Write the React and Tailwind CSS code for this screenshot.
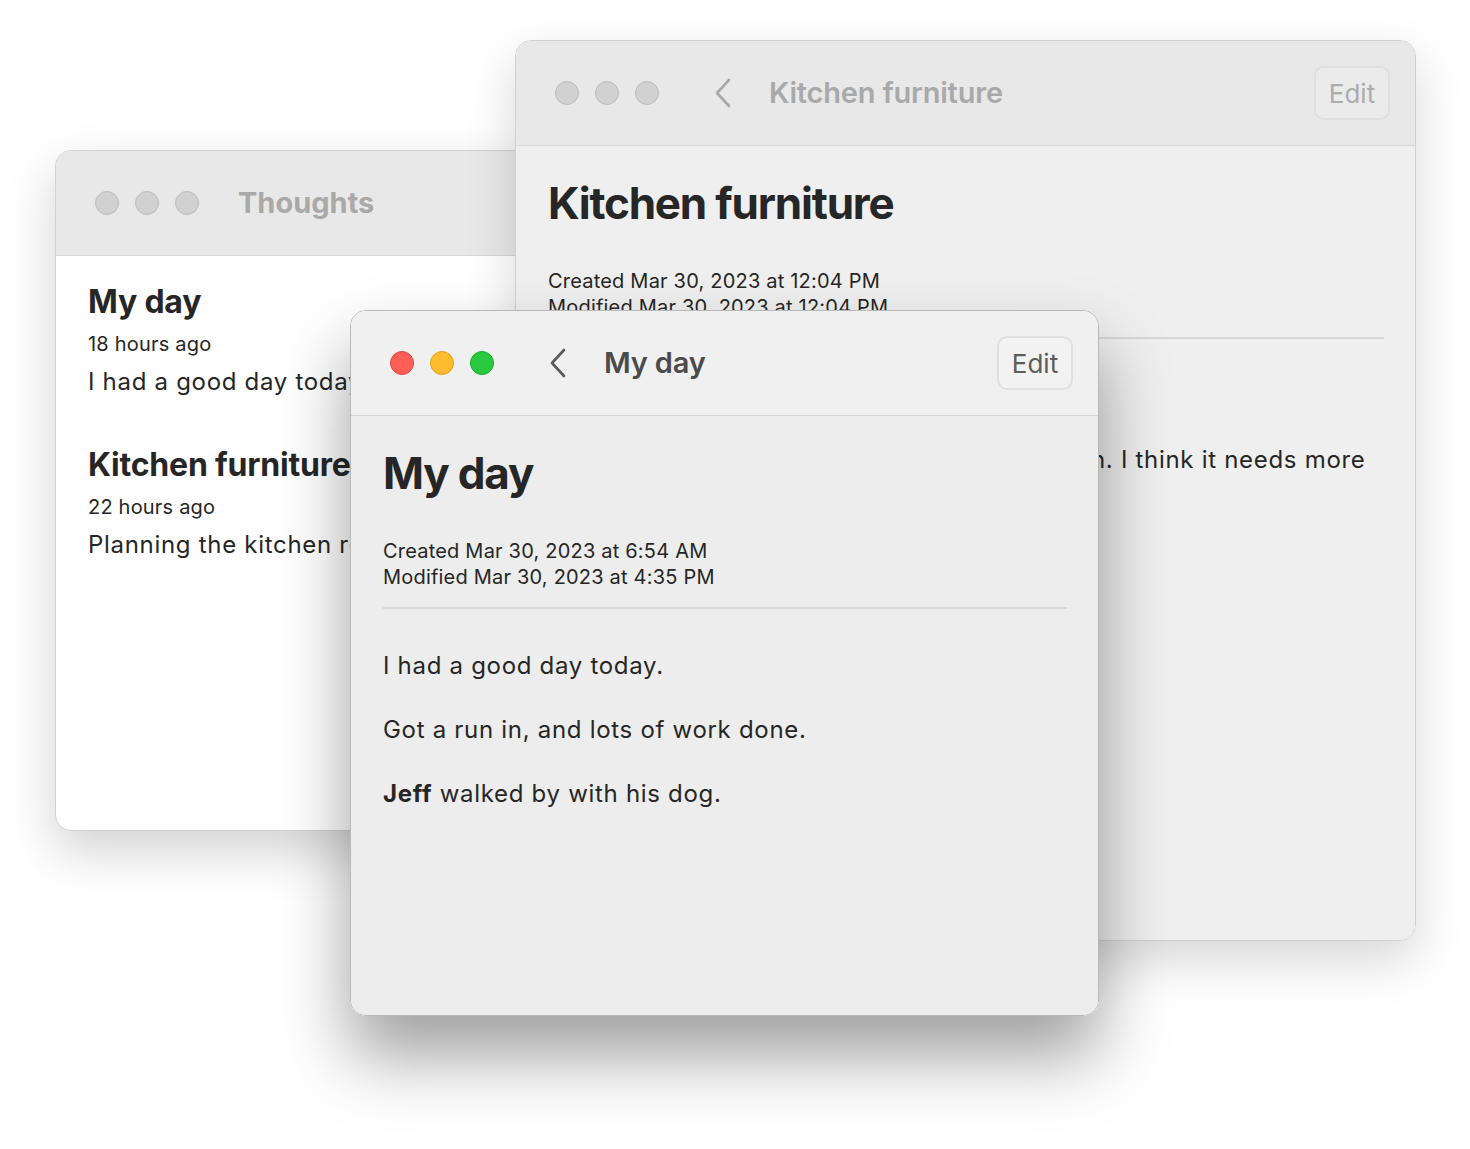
import React from 'react'

const font = { fontFamily: 'Inter, "Noto Sans", sans-serif' }

function Lights({ active }) {
  if (active) {
    return (
      <div className="flex items-center gap-[16px]">
        <span className="w-[24px] h-[24px] rounded-full bg-[#ff5f57] border border-[#e2463f]" />
        <span className="w-[24px] h-[24px] rounded-full bg-[#febc2e] border border-[#e1a116]" />
        <span className="w-[24px] h-[24px] rounded-full bg-[#28c840] border border-[#14ae2b]" />
      </div>
    )
  }
  return (
    <div className="flex items-center gap-[16px]">
      <span className="w-[24px] h-[24px] rounded-full bg-[#d1d1d1] border border-[#bcbcbc]" />
      <span className="w-[24px] h-[24px] rounded-full bg-[#d1d1d1] border border-[#bcbcbc]" />
      <span className="w-[24px] h-[24px] rounded-full bg-[#d1d1d1] border border-[#bcbcbc]" />
    </div>
  )
}

function Chevron({ color }) {
  return (
    <svg width="18" height="30" viewBox="0 0 18 30" fill="none">
      <polyline points="15,2 3,15 15,28" stroke={color} strokeWidth="2.6" strokeLinecap="round" strokeLinejoin="round" />
    </svg>
  )
}

// Note detail window, used for both the front and back window
function NoteWindow({ active, title, created, modified, className, children }) {
  const titleColor = active ? 'text-[#4b4b4b]' : 'text-[#a9a9a9]'
  return (
    <div className={`absolute rounded-[16px] overflow-hidden border flex flex-col ${className}`}>
      <div className={`h-[105px] shrink-0 flex items-center pl-[39px] pr-[25px] border-b border-[#d6d6d6] ${active ? 'bg-[#f0f0f0]' : 'bg-[#e8e8e8]'}`}>
        <Lights active={active} />
        <div className="ml-[55px]">
          <Chevron color={active ? '#5a5a5a' : '#a9a9a9'} />
        </div>
        <div className={`ml-[37px] text-[29px] font-semibold tracking-[-0.2px] ${titleColor}`}>{title}</div>
        <div className={`ml-auto w-[76px] h-[54px] rounded-[10px] border-2 border-[#e0e0e0] flex items-center justify-center text-[26px] ${active ? 'bg-[#f2f2f2] text-[#5c5c5c]' : 'bg-[#ebebeb] text-[#acacac]'}`}>
          Edit
        </div>
      </div>
      <div className={`flex-1 pl-[32px] pr-[31px] pt-[31px] text-[#262626] ${active ? 'bg-[#ecedec]' : 'bg-[#efefef]'}`}>
        <h1 className="text-[44px] leading-[52px] font-bold tracking-[-1.2px]">{title}</h1>
        <div className="mt-[39px] text-[20px] leading-[26px] tracking-[0.2px]">
          <div>{created}</div>
          <div>{modified}</div>
        </div>
        <div className="mt-[17px] h-[2px] bg-[#d6d7d6]" />
        <div className="mt-[41px] flex flex-col gap-[32px] text-[24px] leading-[32px] tracking-[0.7px]">
          {children}
        </div>
      </div>
    </div>
  )
}

function ListWindow() {
  const notes = [
    { title: 'My day', time: '18 hours ago', preview: 'I had a good day today.' },
    { title: 'Kitchen furniture', time: '22 hours ago', preview: 'Planning the kitchen renovation.' },
  ]
  return (
    <div className="absolute left-[55px] top-[150px] w-[640px] h-[681px] rounded-[16px] overflow-hidden border border-[#d2d2d2] bg-white flex flex-col shadow-[0_20px_50px_rgba(0,0,0,0.18)]">
      <div className="h-[105px] shrink-0 flex items-center pl-[39px] bg-[#e8e8e8] border-b border-[#d6d6d6]">
        <Lights />
        <div className="ml-[39px] text-[29px] font-bold text-[#a9a9a9]">Thoughts</div>
      </div>
      <div className="pl-[32px] pt-[26px] text-[#262626]">
        {notes.map((n, i) => (
          <div key={i} className={i > 0 ? 'mt-[47px]' : ''}>
            <div className="text-[32px] leading-[40px] font-bold tracking-[-0.2px]">{n.title}</div>
            <div className="mt-[8px] text-[20px] leading-[28px] tracking-[0.2px]">{n.time}</div>
            <div className="mt-[8px] text-[24px] leading-[32px] tracking-[0.7px] whitespace-nowrap">{n.preview}</div>
          </div>
        ))}
      </div>
    </div>
  )
}

export default function App() {
  return (
    <div className="relative w-[1470px] h-[1149px] bg-white overflow-hidden" style={font}>
      <ListWindow />
      <NoteWindow
        title="Kitchen furniture"
        created="Created Mar 30, 2023 at 12:04 PM"
        modified="Modified Mar 30, 2023 at 12:04 PM"
        className="left-[515px] top-[40px] w-[901px] h-[901px] border-[#d0d0d0] shadow-[0_20px_50px_rgba(0,0,0,0.16)]"
      >
        <p>Planning the kitchen renovation.</p>
        <p className="whitespace-nowrap">
          I want a new round dining table for the kitchen. I think it needs more
          <br />
          space for the chairs.
        </p>
      </NoteWindow>
      <NoteWindow
        active
        title="My day"
        created="Created Mar 30, 2023 at 6:54 AM"
        modified="Modified Mar 30, 2023 at 4:35 PM"
        className="left-[350px] top-[310px] w-[749px] h-[706px] border-[#b9b9b9] shadow-[0_40px_70px_rgba(0,0,0,0.38)]"
      >
        <p>I had a good day today.</p>
        <p>Got a run in, and lots of work done.</p>
        <p><span className="font-bold">Jeff</span> walked by with his dog.</p>
      </NoteWindow>
    </div>
  )
}
